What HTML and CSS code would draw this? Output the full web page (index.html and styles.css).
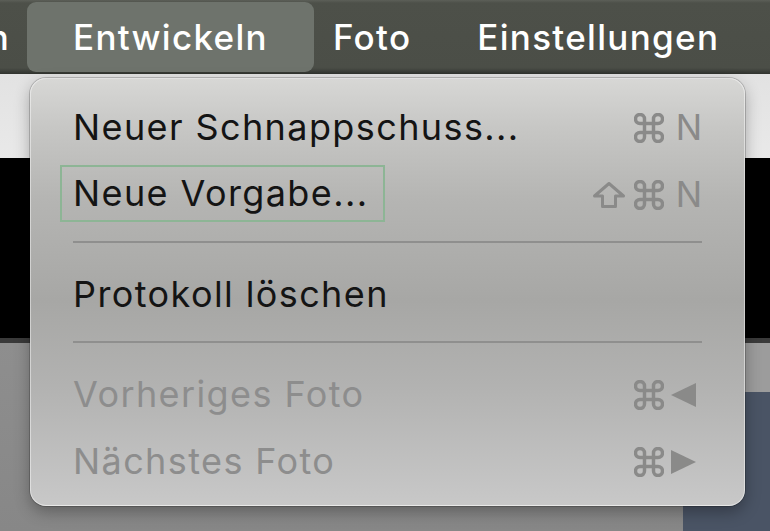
FILE: index.html
```html
<!DOCTYPE html>
<html lang="de">
<head>
<meta charset="utf-8">
<title>Entwickeln</title>
<link rel="stylesheet" href="styles.css">
</head>
<body>
<div class="screen">
  <nav class="menubar">
    <span class="mb-item mb-cut">Bearbeiten</span>
    <span class="mb-item mb-active">Entwickeln</span>
    <span class="mb-item">Foto</span>
    <span class="mb-item">Einstellungen</span>
  </nav>
  <main class="stage">
    <div class="menu">
      <div class="row">
        <span class="label">Neuer Schnappschuss...</span>
        <span class="keys">
          <svg class="k-cmd" viewBox="2 2 20 20"><path d="M15 6v12a3 3 0 1 0 3-3H6a3 3 0 1 0 3 3V6a3 3 0 1 0-3 3h12a3 3 0 1 0-3-3"/></svg>
          <span class="k-letter">N</span>
        </span>
      </div>
      <div class="row">
        <span class="label focused">Neue Vorgabe...</span>
        <span class="keys">
          <svg class="k-shift" viewBox="0 0 34 28"><path d="M17 2.5 L2.5 15 H10.5 V25.5 H23.5 V15 H31.5 Z"/></svg>
          <svg class="k-cmd" viewBox="2 2 20 20"><path d="M15 6v12a3 3 0 1 0 3-3H6a3 3 0 1 0 3 3V6a3 3 0 1 0-3 3h12a3 3 0 1 0-3-3"/></svg>
          <span class="k-letter">N</span>
        </span>
      </div>
      <div class="sep"></div>
      <div class="row">
        <span class="label">Protokoll löschen</span>
      </div>
      <div class="sep"></div>
      <div class="row disabled">
        <span class="label">Vorheriges Foto</span>
        <span class="keys">
          <svg class="k-cmd" viewBox="2 2 20 20"><path d="M15 6v12a3 3 0 1 0 3-3H6a3 3 0 1 0 3 3V6a3 3 0 1 0-3 3h12a3 3 0 1 0-3-3"/></svg>
          <svg class="k-arrow" viewBox="0 0 31 24"><polygon points="25,0 0,12 25,24"/></svg>
        </span>
      </div>
      <div class="row disabled">
        <span class="label">Nächstes Foto</span>
        <span class="keys">
          <svg class="k-cmd" viewBox="2 2 20 20"><path d="M15 6v12a3 3 0 1 0 3-3H6a3 3 0 1 0 3 3V6a3 3 0 1 0-3 3h12a3 3 0 1 0-3-3"/></svg>
          <svg class="k-arrow" viewBox="0 0 31 24"><polygon points="0,0 25,12 0,24"/></svg>
        </span>
      </div>
    </div>
  </main>
</div>
</body>
</html>
```

FILE: styles.css
```css
* { box-sizing: border-box; }

html, body {
  margin: 0;
  padding: 0;
}

body {
  width: 770px;
  height: 531px;
  overflow: hidden;
  font-family: "Inter", "Liberation Sans", Arial, sans-serif;
  background: #888;
}

.screen {
  width: 770px;
  height: 531px;
  display: flex;
  flex-direction: column;
}

/* ---------- menu bar ---------- */
.menubar {
  height: 74px;
  flex: none;
  display: flex;
  align-items: stretch;
  padding: 2px 0;
  background: linear-gradient(to bottom, #5c5f58 0, #4d5049 3px, #4b4e47 68px, #30332e 74px);
  color: #fff;
  font-size: 35px;
  font-weight: 500;
  letter-spacing: 1.3px;
  white-space: nowrap;
}

.mb-item {
  display: flex;
  align-items: center;
  padding: 0 33px;
}

.mb-cut {
  width: 27px;
  padding: 0 17px 0 0;
  overflow: hidden;
  direction: rtl;
  justify-content: flex-start;
}

.mb-active {
  padding: 0 46px 0 46px;
  margin-right: -14px;
  background: #6e736c;
  border-radius: 9px;
}

/* ---------- background content ---------- */
.stage {
  flex: 1;
  position: relative;
  background:
    linear-gradient(#4a5465, #4a5465) 683px 318px / 100px 200px no-repeat,
    linear-gradient(#9c9c9c, #9c9c9c) 745px 269px / 40px 49px no-repeat,
    linear-gradient(to bottom,
      #e2e2e2 0, #e9e9e9 84px,
      #000 84px, #000 264px,
      #3a3a3a 264px, #3a3a3a 269px,
      #8e8e8e 269px, #878787 457px);
}

/* ---------- dropdown menu ---------- */
.menu {
  position: absolute;
  left: 30px;
  top: 4px;
  width: 715px;
  height: 428px;
  padding: 15px 42px 0 42px;
  border-radius: 16px;
  background: linear-gradient(to bottom,
    #d7d7d5 0%, #c6c6c4 12%, #b5b5b3 28%, #a7a7a5 52%, #b2b2b1 72%, #c8c8c8 100%);
  border: 1px solid rgba(255, 255, 255, 0.45);
  box-shadow: 0 0 0 1px rgba(0, 0, 0, 0.18), 0 6px 16px rgba(0, 0, 0, 0.3);
  display: flex;
  flex-direction: column;
  font-size: 36px;
  letter-spacing: 1.4px;
  color: #141414;
}

.row {
  height: 67px;
  flex: none;
  display: flex;
  align-items: center;
  justify-content: space-between;
  white-space: nowrap;
}

.label {
  display: inline-block;
  line-height: 53px;
}

.label.focused {
  border: 2px solid #8db595;
  padding: 0 14px 0 11px;
  margin-left: -13px;
  margin-top: -2px;
}

.row.disabled { color: #8d8d8d; }

.sep {
  flex: none;
  height: 2px;
  margin: 13px 0 18px;
  background: #8f8f8e;
}

.keys {
  display: flex;
  align-items: center;
  color: #8a8a89;
  letter-spacing: 0;
}

.k-cmd {
  width: 30px;
  height: 30px;
  fill: none;
  stroke: currentColor;
  stroke-width: 2.3;
}

.k-shift {
  width: 34px;
  height: 28px;
  margin-right: 8px;
  fill: none;
  stroke: currentColor;
  stroke-width: 3;
  stroke-linejoin: round;
}

.k-letter {
  margin-left: 12px;
  font-size: 35px;
  font-weight: 400;
  line-height: 1;
}

.k-arrow {
  width: 31px;
  height: 24px;
  margin-left: 7px;
  fill: currentColor;
}
```
